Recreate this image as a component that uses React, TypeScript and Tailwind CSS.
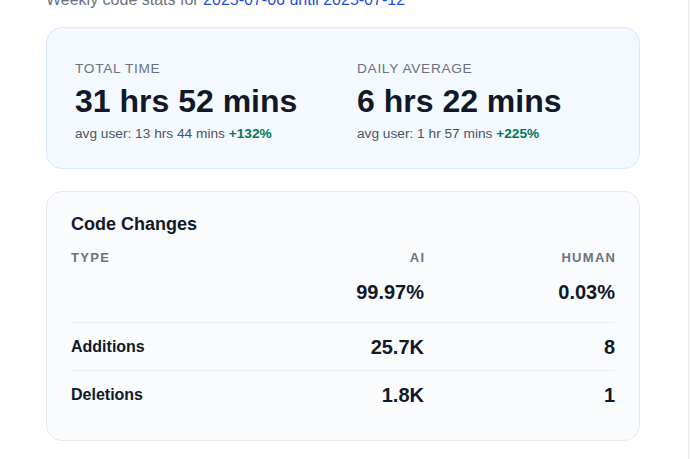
import React from "react";

const font = { fontFamily: '"Liberation Sans", Arial, Helvetica, sans-serif' };

function Stat({ label, value, avg, delta }: { label: string; value: string; avg: string; delta: string }) {
  return (
    <div className="flex flex-col">
      <div className="text-[13.7px] leading-5 tracking-wider uppercase text-[#6b7280]">{label}</div>
      <div className="mt-[2px] text-[32px] leading-10 font-bold text-[#111827]">{value}</div>
      <div className="mt-[3px] text-[13.7px] leading-5 text-[#4b5563]">
        {avg} <span className="font-bold text-[#047857]">{delta}</span>
      </div>
    </div>
  );
}

export default function App() {
  const rows = [
    { type: "Additions", ai: "25.7K", human: "8" },
    { type: "Deletions", ai: "1.8K", human: "1" },
  ];
  return (
    <div className="flex min-h-screen bg-white overflow-hidden" style={font}>
      <main className="w-[688px] pl-[46px]">
        <p className="mt-[-12px] text-base leading-6 text-[#6b7280] whitespace-nowrap">
          Weekly code stats for <span className="text-[#1d4ed8]">2025-07-06 until 2025-07-12</span>
        </p>

        <section className="mt-[15px] w-[594px] rounded-2xl border border-[#dbe7fc] bg-[#f4f8ff] px-7 pt-[31px] pb-[24px]">
          <div className="grid grid-cols-2 gap-7">
            <Stat label="Total Time" value="31 hrs 52 mins" avg="avg user: 13 hrs 44 mins" delta="+132%" />
            <Stat label="Daily Average" value="6 hrs 22 mins" avg="avg user: 1 hr 57 mins" delta="+225%" />
          </div>
        </section>

        <section className="mt-[22px] w-[594px] rounded-2xl border border-[#e6e9ee] bg-[#fafbfd] px-6 pt-[18px] pb-[22px]">
          <h2 className="text-lg leading-7 font-bold text-[#111827]">Code Changes</h2>
          <div className="mt-[10px] grid grid-cols-[1fr_191px_191px] text-[13px] leading-5 font-bold tracking-widest text-[#6b7280]">
            <div>TYPE</div>
            <div className="text-right mr-[-1.3px]">AI</div>
            <div className="text-right mr-[-1.3px]">HUMAN</div>
          </div>
          <div className="grid grid-cols-[1fr_191px_191px] pt-[10px] pb-4 text-xl leading-7 font-bold text-[#111827]">
            <div></div>
            <div className="text-right">99.97%</div>
            <div className="text-right">0.03%</div>
          </div>
          {rows.map((r) => (
            <div
              key={r.type}
              className="grid grid-cols-[1fr_191px_191px] items-center border-t border-[#eceef2] pt-[10px] pb-[9px]"
            >
              <div className="text-base leading-7 font-bold text-[#111827]">{r.type}</div>
              <div className="text-right text-xl leading-7 font-bold text-[#111827]">{r.ai}</div>
              <div className="text-right text-xl leading-7 font-bold text-[#111827]">{r.human}</div>
            </div>
          ))}
        </section>
      </main>
      <div className="w-px bg-[#ececec]"></div>
      <div className="flex-1"></div>
    </div>
  );
}
